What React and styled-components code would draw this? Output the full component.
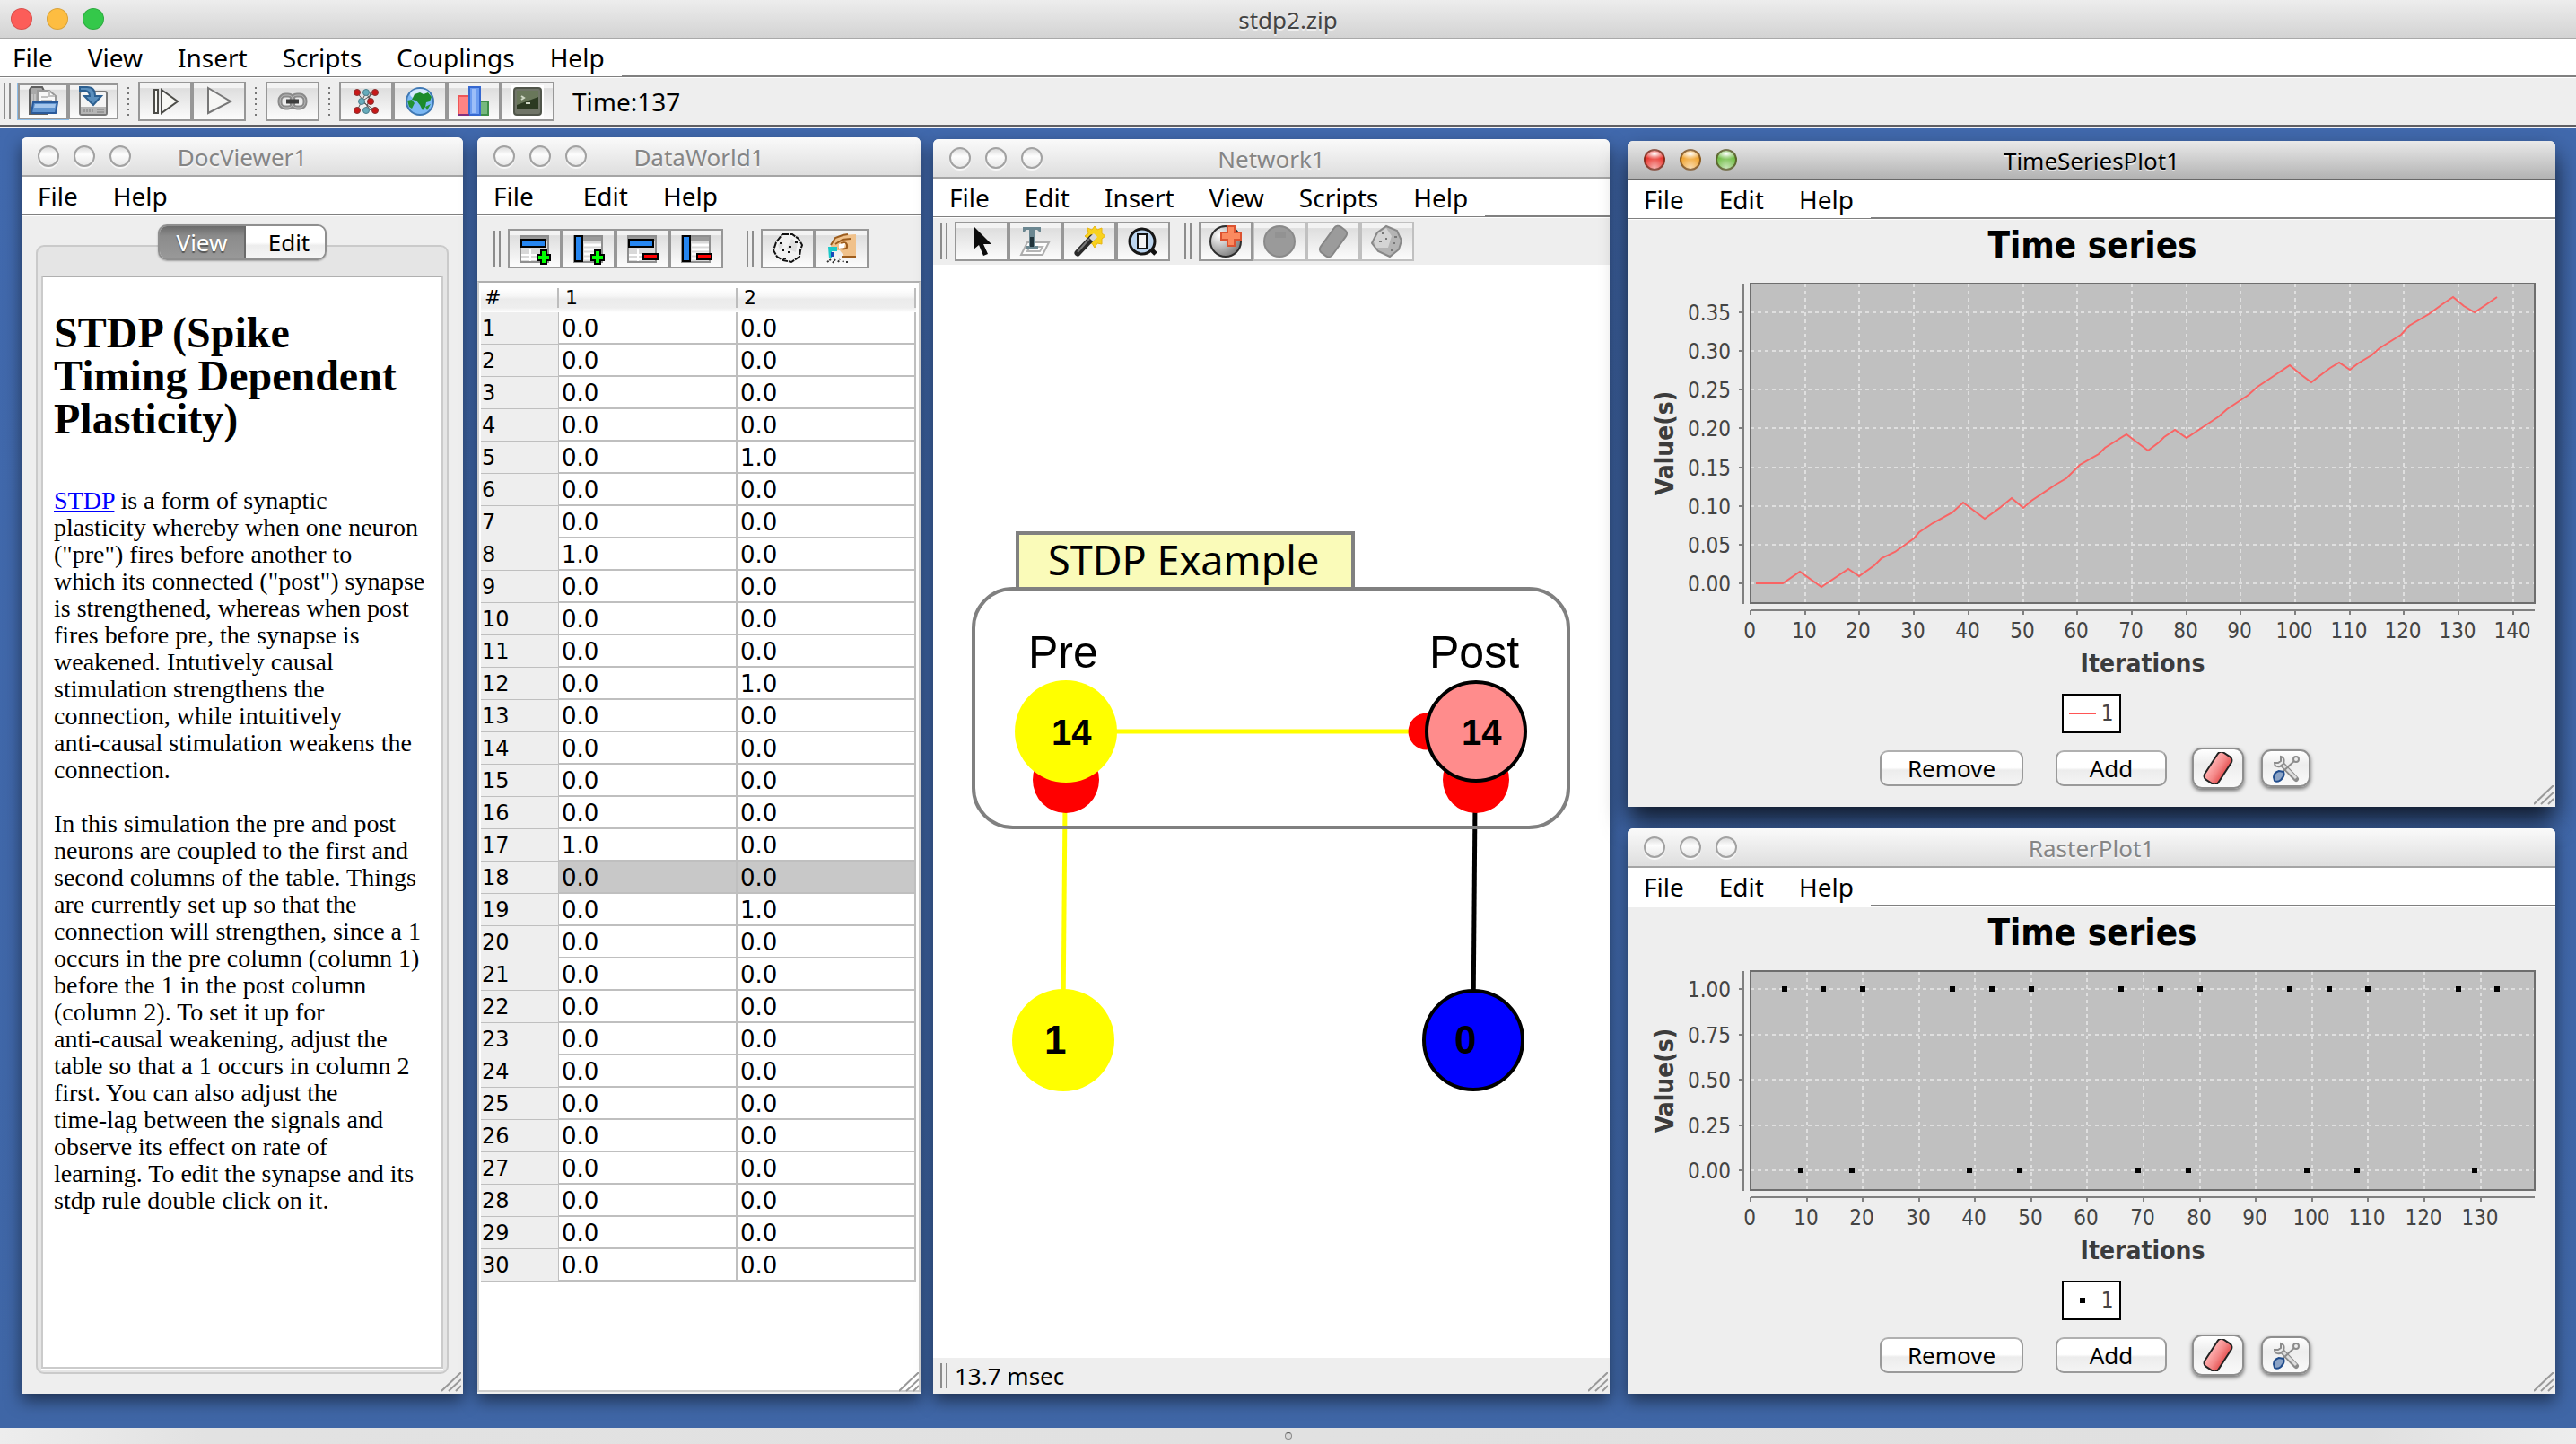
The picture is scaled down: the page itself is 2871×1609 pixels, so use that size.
import React, { Fragment } from 'react';
import styled, { createGlobalStyle, css } from 'styled-components';

const UI_FONT = '"Noto Sans", "Open Sans", sans-serif';
const CHART_FONT = '"DejaVu Sans Condensed", "Noto Sans", sans-serif';

const GlobalStyle = createGlobalStyle`
  * {
    box-sizing: border-box;
  }
  body {
    margin: 0;
    font-family: ${UI_FONT};
    color: #000;
  }
  button {
    font-family: inherit;
    color: inherit;
  }
`;

/* ---------- page ---------- */

const Page = styled.div`
  display: flex;
  flex-direction: column;
  min-height: 100vh;
  background: #eee;
`;

const Desktop = styled.main`
  flex: 1;
  display: grid;
  grid-template-columns: 492fr 16px 494fr 14px 754fr 20px 1034fr;
  padding: 10px 23px 38px 24px;
  background: linear-gradient(#4169ad, #3f66a6);
`;

const Column = styled.div`
  grid-column: ${({ $col }) => $col};
  display: flex;
  flex-direction: column;
  gap: 24px;
  min-width: 0;
  padding-top: ${({ $drop }) => $drop || 0}px;
`;

const BottomBar = styled.footer`
  display: flex;
  align-items: center;
  justify-content: center;
  height: 18px;
  background: linear-gradient(90deg, #ededed, #e2e2e2 8%, #e0e0e0 92%, #ededed);
`;

const SplitKnob = styled.span`
  width: 8px;
  height: 8px;
  border: 1px solid #8c8c8c;
  border-top-color: #555;
  border-radius: 50%;
  background: #d8d8d8;
`;

/* ---------- title bars ---------- */

const TitleBar = styled.header`
  display: grid;
  grid-template-columns: 1fr auto 1fr;
  align-items: center;
  height: 44px;
  padding: 0 18px;
  border-radius: 6px 6px 0 0;
  border-bottom: 2px solid ${({ $active }) => ($active ? '#686868' : '#a5a5a5')};
  background: ${({ $active }) =>
    $active ? 'linear-gradient(#e9e9e9, #b3b3b3)' : 'linear-gradient(#fafafa, #dedede)'};
`;

const MainTitleBar = styled(TitleBar)`
  height: 43px;
  padding: 0 12px;
  border-radius: 0;
  border-bottom: 1px solid #a9a9a9;
  background: linear-gradient(#ededed, #d3d3d3);
`;

const Lights = styled.div`
  display: flex;
  gap: 16px;
`;

const flatLight = css`
  border: 1px solid rgba(0, 0, 0, 0.14);
  background: ${({ $color }) => $color};
`;

const glossyLight = css`
  border: 2px solid rgba(60, 30, 10, 0.55);
  background: radial-gradient(ellipse 60% 30% at 50% 18%, #fff, transparent),
    radial-gradient(circle at 50% 95%, #fff9 0, transparent 60%), ${({ $color }) => $color};
`;

const emptyLight = css`
  border: 2px solid #a2a2a2;
  background: linear-gradient(#dcdcdc, #fdfdfd 40%, #e9e9e9);
  box-shadow: 0 2px 0 rgba(255, 255, 255, 0.7);
`;

const Light = styled.button`
  width: 24px;
  height: 24px;
  padding: 0;
  border-radius: 50%;
  ${({ $kind }) => ({ flat: flatLight, glossy: glossyLight, empty: emptyLight }[$kind])}
`;

const Title = styled.h1`
  margin: 1px 0 0;
  font-size: 26px;
  font-weight: 400;
  line-height: 32px;
  color: ${({ $color }) => $color || '#858585'};
  text-shadow: 0 2px 0 rgba(255, 255, 255, 0.6);
`;

/* ---------- menu bars ---------- */

const MenuBar = styled.nav`
  display: flex;
  height: 44px;
  border-bottom: 1px solid #fff;
  background: #fff;
`;

const MenuList = styled.div`
  display: flex;
  padding: 0 19px 0 ${({ $left }) => $left}px;
  gap: 39px;
  border-bottom: 1px solid #808080;
`;

const MenuFill = styled.div`
  flex: 1;
  border-bottom: 2px solid #808080;
`;

const MenuItem = styled.button`
  padding: 0;
  margin-right: ${({ $wide }) => ($wide ? 16 : 0)}px;
  border: 0;
  background: none;
  font-size: 28px;
  line-height: 40px;
`;

/* ---------- internal frames ---------- */

const Frame = styled.section`
  position: relative;
  flex: ${({ $fill }) => ($fill ? '1 0 auto' : '0 0 auto')};
  display: flex;
  flex-direction: column;
  border-radius: 6px 6px 0 0;
  background: #eee;
  box-shadow: ${({ $active }) =>
    $active ? '0 16px 28px rgba(0, 0, 0, 0.75)' : '0 8px 18px rgba(0, 0, 0, 0.5)'};
`;

const ResizeMark = styled.svg`
  position: absolute;
  right: 2px;
  bottom: 2px;
  width: 22px;
  height: 22px;
`;

/* ---------- tool bars ---------- */

const ToolBar = styled.div`
  display: flex;
  align-items: center;
  gap: 8px;
  height: ${({ $height }) => $height || 52}px;
  padding: 0 ${({ $left }) => $left || 8}px;
`;

const MainToolBar = styled(ToolBar)`
  height: 56px;
  padding: 0 4px 2px;
  border-bottom: 2px solid #f4f4f8;
  box-shadow: inset 0 -2px 0 #5f5f63;
`;

const Grip = styled.span`
  width: 8px;
  height: ${({ $height }) => $height || 40}px;
  margin-left: ${({ $gap }) => $gap || 0}px;
  border: solid #8c8c8c;
  border-width: 0 2px;
`;

const Dots = styled.span`
  width: 2px;
  height: 32px;
  margin: 0 2px;
  background: repeating-linear-gradient(#777 0 2px, transparent 2px 6px);
`;

const ButtonGroup = styled.div`
  display: flex;
`;

const ToolButton = styled.button`
  display: flex;
  align-items: center;
  justify-content: center;
  width: ${({ $small }) => ($small ? 56 : 60)}px;
  height: ${({ $small }) => ($small ? 40 : 44)}px;
  padding: 0;
  border: 2px solid ${({ disabled }) => (disabled ? '#c0c0c0' : '#979797')};
  outline: ${({ $focus }) => ($focus ? '1px solid #8bbce8' : 'none')};
  background: linear-gradient(#f3f3f3 12%, #dedede 14%, #fcfcfc);
  svg {
    width: 36px;
    height: 36px;
    overflow: visible;
  }
`;

const TimeLabel = styled.span`
  margin-left: 12px;
  font-size: 28px;
`;

/* ---------- document viewer ---------- */

const DocBody = styled.div`
  flex: 1;
  display: flex;
  flex-direction: column;
  padding: 9px 16px 22px;
`;

const Tabs = styled.div`
  position: relative;
  align-self: center;
  display: flex;
  height: 40px;
  margin-bottom: -17px;
  border: 2px solid #8f8f8f;
  border-radius: 10px;
  overflow: hidden;
  box-shadow: 0 1px 2px rgba(0, 0, 0, 0.3);
`;

const Tab = styled.button`
  width: ${({ $on }) => ($on ? 96 : 88)}px;
  padding: 0 0 0 ${({ $on }) => ($on ? 0 : 8)}px;
  border: 0;
  font-size: 26px;
  line-height: 32px;
  ${({ $on }) =>
    $on
      ? css`
          color: #fff;
          text-shadow: 0 2px 1px #555;
          background: linear-gradient(#6b6b6b, #8b8b8b 30%, #999);
          border-right: 2px solid #6a6a6a;
        `
      : css`
          background: linear-gradient(#fff 50%, #ededed 60%, #f6f6f6);
        `}
`;

const DocPanel = styled.div`
  flex: 1;
  display: flex;
  padding: 32px 4px 4px;
  border: 2px solid #cacaca;
  border-radius: 9px;
  background: #e5e5e5;
`;

const DocPage = styled.article`
  flex: 1;
  padding: 38px 8px 20px 12px;
  border: 2px solid #cbcbcb;
  border-top-color: #b0b0b0;
  background: #fff;
  box-shadow: 0 2px 0 #fff;
  font-family: 'Liberation Serif', serif;
  font-size: 28px;
  line-height: 30px;
  h2 {
    margin: 0 0 52px;
    font-size: 48px;
    line-height: 48px;
  }
  p {
    margin: 0 0 30px;
  }
  a {
    color: #00f;
  }
`;

/* ---------- data table ---------- */

const TableWell = styled.div`
  flex: 1;
  margin-bottom: 2px;
  padding: 0 3px 0 2px;
  border: 2px solid #cdcdcd;
  border-top-color: #b0b0b0;
  background: #fff;
`;

const Table = styled.table`
  width: 100%;
  table-layout: fixed;
  border-collapse: separate;
  border-spacing: 0;
  font-family: 'DejaVu Sans', sans-serif;
  text-align: left;
`;

const HeadCell = styled.th`
  width: ${({ $narrow }) => ($narrow ? '87px' : 'auto')};
  height: 33px;
  padding: 0 0 0 ${({ $narrow }) => ($narrow ? 4 : 7)}px;
  font-size: 22px;
  font-weight: 400;
  background: linear-gradient(#bdbdbd, #bdbdbd) right 6px / 2px 22px no-repeat,
    linear-gradient(#fff 20%, #f6f6f6 45%, #ebebeb 55%, #eee 85%, #fff);
`;

const RowHead = styled.th`
  height: 36px;
  padding: 0 0 0 1px;
  border-bottom: 1px solid #bfbfbf;
  border-right: 1px solid #bfbfbf;
  background: #eee;
  font-size: 24px;
  font-weight: 400;
  line-height: 32px;
`;

const Cell = styled.td`
  padding: 2px 0 0 3px;
  border: solid #bfbfbf;
  border-width: 0 2px 2px 0;
  background: ${({ $selected }) => ($selected ? '#c8c8c8' : '#fff')};
  font-size: 26px;
  line-height: 32px;
`;

/* ---------- network ---------- */

const Canvas = styled.div`
  flex: 1;
  background: #fff;
`;

const Graph = styled.svg`
  display: block;
  width: 100%;
`;

const StatusBar = styled.div`
  display: flex;
  align-items: center;
  gap: 8px;
  height: 40px;
  padding: 0 8px;
  font-size: 26px;
`;

/* ---------- plots ---------- */

const PlotBody = styled.div`
  display: flex;
  flex-direction: column;
  align-items: center;
  padding-bottom: 20px;
`;

const ChartSvg = styled.svg`
  display: block;
  width: 100%;
  font-family: ${CHART_FONT};
`;

const Legend = styled.div`
  display: flex;
  align-items: center;
  gap: 6px;
  height: 44px;
  margin: 16px 0;
  padding: 0 7px 0 6px;
  border: 2px solid #000;
  background: #fff;
  font-family: ${CHART_FONT};
  font-size: 24px;
  color: #444;
`;

const LegendKey = styled.span`
  display: flex;
  justify-content: center;
  width: 30px;
  &::before {
    content: '';
    width: ${({ $dot }) => ($dot ? 6 : 30)}px;
    height: ${({ $dot }) => ($dot ? 6 : 2)}px;
    background: ${({ $dot }) => ($dot ? '#000' : '#f55')};
  }
`;

const PlotButtons = styled.div`
  display: flex;
  align-items: center;
  height: 46px;
  margin-left: 8px;
`;

const PushButton = styled.button`
  width: ${({ $width }) => $width}px;
  height: 40px;
  margin-right: ${({ $gap }) => $gap}px;
  padding: 0;
  border: 2px solid #9a9a9a;
  border-top-color: #b0b0b0;
  border-radius: 9px;
  background: linear-gradient(#fff 48%, #ececec 56%, #f4f4f4);
  font-size: 26px;
  line-height: 32px;
`;

const IconButton = styled.button`
  display: flex;
  align-items: center;
  justify-content: center;
  width: ${({ $width }) => $width}px;
  height: ${({ $height }) => $height}px;
  margin-right: ${({ $gap }) => $gap || 0}px;
  padding: 0;
  border: 2px solid #8e8e8e;
  border-radius: 11px;
  background: linear-gradient(#fff, #ededed 40%, #fafafa);
  box-shadow: 0 2px 4px rgba(0, 0, 0, 0.55);
  svg {
    width: 36px;
    height: 36px;
  }
`;

/* ---------- icons, all on a 36 x 36 grid ---------- */

const OpenIcon = () => (
  <svg viewBox="0 0 36 36">
    <path d="M3 32V5l2-3h12l2 4h3v26z" fill="#a9a9a9" stroke="#5f5f5f" strokeWidth="2" />
    <path d="M6 28V10M9 28V10" stroke="#dcdcdc" strokeWidth="1" />
    <path d="M12 6h13l7 6v14H12z" fill="#f8f8f8" stroke="#999" strokeWidth="2" />
    <path d="M25 6v6h6M16 13h8M16 17h12" fill="none" stroke="#c2c2c2" strokeWidth="2" />
    <path d="M7 19h27l-2 12H5z" fill="#5f93cf" stroke="#2a5a9b" strokeWidth="2" />
    <path d="M9 21h23l-1 4H8z" fill="#a5c6ec" />
  </svg>
);

const SaveIcon = () => (
  <svg viewBox="0 0 36 36">
    <rect x="3" y="7" width="30" height="26" rx="2" fill="#f4f4f4" stroke="#777" strokeWidth="2" />
    <path d="M4 24h28v8H4z" fill="#b5b5b5" />
    <path d="M8 26v4M11 26v4M14 26v4M17 26v4M22 27h8M22 30h8" stroke="#7c7c7c" strokeWidth="1" />
    <path d="M3 2h8q9 0 9 10h7L18 22 8 12h6q0-5-5-6H3z" fill="#5b8fbd" stroke="#2c5f90" strokeWidth="2" />
  </svg>
);

const StepIcon = () => (
  <svg viewBox="0 0 36 36" fill="#f8f8f4" stroke="#4c4c48" strokeWidth="2">
    <path d="M6 5h4v26H6zM14 5l18 13-18 13z" />
  </svg>
);

const PlayIcon = () => (
  <svg viewBox="0 0 36 36">
    <path d="M6 3l25 15L6 31z" fill="#f6f6f4" stroke="#777" strokeWidth="2" />
  </svg>
);

const ChainIcon = () => (
  <svg viewBox="0 0 36 36" fill="none">
    <rect x="4" y="11" width="15" height="14" rx="6" stroke="#8a8a8a" strokeWidth="5" />
    <rect x="17" y="11" width="15" height="14" rx="6" stroke="#8a8a8a" strokeWidth="5" />
    <rect x="4" y="11" width="15" height="14" rx="6" stroke="#bbb" strokeWidth="1" />
    <rect x="17" y="11" width="15" height="14" rx="6" stroke="#bbb" strokeWidth="1" />
    <path d="M11 18h14" stroke="#3d3d3d" strokeWidth="5" />
  </svg>
);

const NetIcon = () => (
  <svg viewBox="0 0 36 36">
    <path d="M8 8l15 20M28 8L13 18l15 10M8 28l10-20M18 28l5-20M18 8l5 10" fill="none" stroke="#555" />
    {[[8, 8], [28, 8], [23, 18], [8, 28], [28, 28]].map(([x, y]) => (
      <circle key={`${x}-${y}`} cx={x} cy={y} r="3.5" fill="#c81818" stroke="#833" />
    ))}
    {[[18, 8], [13, 18], [18, 28]].map(([x, y]) => (
      <circle key={`${x}-${y}`} cx={x} cy={y} r="3.5" fill="#67acbc" stroke="#4a7f8c" />
    ))}
  </svg>
);

const GlobeIcon = () => (
  <svg viewBox="0 0 36 36">
    <circle cx="18" cy="18" r="15" fill="#7cb8f4" stroke="#3f78b4" strokeWidth="2" />
    <ellipse cx="18" cy="10" rx="11" ry="6" fill="#d5e9fc" />
    <path d="M12 10l6-2 4 2 5-2 4 5-2 5-4 1-1 5-3 4-3-6-4-5-5-1z" fill="#1b8b2c" />
    <path d="M4 17l5-1 3 4-3 6-3-2zM24 24l6-3-4 7z" fill="#239233" />
  </svg>
);

const BarsIcon = () => (
  <svg viewBox="0 0 36 36">
    <path d="M1 12h12v21H1z" fill="#ff8484" stroke="#ee5656" strokeWidth="2" />
    <path d="M24 18h10v15H24z" fill="#76b87e" stroke="#3f8f4a" strokeWidth="2" />
    <path d="M13 2h12v31H13z" fill="#6d9cf0" stroke="#3668d0" strokeWidth="2" />
    <path d="M16 4h5v27h-5z" fill="#9dbef8" />
    <path d="M0 33h13" stroke="#803080" strokeWidth="2" />
  </svg>
);

const TerminalIcon = () => (
  <svg viewBox="0 0 36 36">
    <path d="M0 0h36v36H0z" fill="#fff" />
    <rect x="3" y="3" width="30" height="30" rx="3" fill="#707568" stroke="#50554a" strokeWidth="2" />
    <path d="M6 6h24v20H6z" fill="#2c3a22" />
    <path d="M6 6h24v7L6 22z" fill="#69775a" />
    <path d="M11 12l3 2-3 2M16 20h5" fill="none" stroke="#cfd8c4" strokeWidth="2" />
  </svg>
);

// shared by the insert / delete row and column buttons
const GridIcon = ({ column, add }) => (
  <svg viewBox="0 0 36 36">
    <path d="M2 4h31v29H2z" fill="#d9d9d9" stroke="#8f8f8f" strokeWidth="2" />
    <path d="M3 5h29v5H3z" fill="#9a9a9a" />
    {column
      ? <path d="M13 14h19M13 19h19M13 24h19M13 29h19" stroke="#fff" strokeWidth="3" />
      : <path d="M3 25h29M3 30h29M13 19v13" stroke="#fff" strokeWidth="2" />}
    {column
      ? <path d="M3 4h8v28H3z" fill="#2686f0" stroke="#000" strokeWidth="2" />
      : <path d="M3 8h27v8H3z" fill="#2686f0" stroke="#000" strokeWidth="2" />}
    {add
      ? <path d="M25 20h6v5h4v6h-4v4h-6v-4h-4v-6h4z" fill="#0f0" stroke="#000" strokeWidth="2" />
      : <path d="M19 24h16v6H19z" fill="#f00" stroke="#000" strokeWidth="2" />}
  </svg>
);

const RockIcon = () => (
  <svg viewBox="0 0 36 36">
    <path d="M12 2h11l7 5 4 7-2 6-1 7-9 6-9-2-7-4-4-7 3-9z" fill="#f2f2f2" stroke="#111" strokeWidth="2" strokeDasharray="7 1" />
    <path d="M22 7l7 4-2 11-10-4zM7 14l3-4 3 4-4 5z" fill="#dedede" />
    <path d="M9 12h3M19 16h3M12 20h2M18 22h3M13 29h3M26 11h3" stroke="#111" strokeWidth="2" />
  </svg>
);

const HandIcon = () => (
  <svg viewBox="0 0 36 36">
    <path d="M6 15L10 7l8-4 16-1v25l-12 1-6-8H8z" fill="#f0c18a" />
    <path d="M6 14l5-8 8-3 6-1M11 13l8-5 9-1M17 12q8-3 7 5-4 3-9 0M34 27H18" fill="none" stroke="#9c5c1d" strokeWidth="2" />
    <path d="M15 13l7-1-1 5-6 1z" fill="#fff" />
    <path d="M3 16h10v5H7v8H4z" fill="#1cc9c9" />
    <path d="M6 22h4v5H6z" fill="#1747b8" />
    <path d="M2 33l4-3M8 34l3-4M14 33l2-3M19 33l2-2M24 34v-2" stroke="#333" strokeWidth="2" strokeDasharray="2 1" />
  </svg>
);

const ArrowIcon = () => (
  <svg viewBox="0 0 36 36">
    <path d="M9 1v26l6-5 5 12 5-2-5-11h9z" fill="#0c0c0c" />
  </svg>
);

const TextIcon = () => (
  <svg viewBox="0 0 36 36">
    <path d="M9 19h24l-7 14H2z" fill="#fdfdfd" stroke="#adadad" strokeWidth="2" />
    <path d="M12 24h14l-3 5H9z" fill="none" stroke="#b5b5b5" strokeWidth="2" />
    <path d="M4 2h20v5h-2l-2-2h-3v18h4v3h-13v-3h3V5H8L6 7H4z" fill="#6b8791" />
    <path d="M12 13h4v11h-4z" fill="#20333b" />
  </svg>
);

const WandIcon = () => (
  <svg viewBox="0 0 36 36">
    <path d="M24 1l3 4 5-2v6l4 3-4 3v6l-5-1-3 5-3-5-5 1 1-6-4-3 4-3-1-6 5 2z" fill="#f8d21e" stroke="#e8b510" />
    <path d="M5 31L21 14" stroke="#2a2a2a" strokeWidth="7" strokeLinecap="round" />
    <path d="M5 30L18 15" stroke="#777" strokeWidth="2" />
    <path d="M20 16l5-5" stroke="#d8d8d8" strokeWidth="6" />
  </svg>
);

const ZoomIcon = () => (
  <svg viewBox="0 0 36 36">
    <path d="M26 26l6 6" stroke="#111" strokeWidth="5" />
    <circle cx="17" cy="18" r="14" fill="#bcd5ef" stroke="#161616" strokeWidth="3" />
    <path d="M12 10h10v16H12z" fill="#f3f3f3" stroke="#111" strokeWidth="2" />
  </svg>
);

const AddNeuronIcon = () => (
  <svg viewBox="0 0 36 36">
    <defs>
      <radialGradient id="ball" cx="0.3" cy="0.3" r="0.8">
        <stop offset="0" stopColor="#fff" />
        <stop offset="1" stopColor="#777" />
      </radialGradient>
    </defs>
    <circle cx="18" cy="18" r="17" fill="url(#ball)" stroke="#2e2e2e" strokeWidth="2" />
    <path d="M20 1h8v7h7v8h-7v7h-8v-7h-7V8h7z" fill="#fb8a5f" stroke="#dc5331" strokeWidth="2" />
  </svg>
);

const GreyBallIcon = () => (
  <svg viewBox="0 0 36 36">
    <circle cx="18" cy="18" r="17" fill="#9a9a9a" stroke="#8a8a8a" strokeWidth="2" />
    <path d="M13 8h12v6H13z" fill="#929292" />
  </svg>
);

const GreyEraserIcon = () => (
  <svg viewBox="0 0 36 36">
    <rect x="10" y="0" width="16" height="36" rx="5" transform="rotate(36 18 18)" fill="#9b9b9b" stroke="#868686" strokeWidth="2" />
  </svg>
);

const GreyDieIcon = () => (
  <svg viewBox="0 0 36 36">
    <path d="M7 8L17 1l12 5 5 11-3 10-10 8-13-6-7-9z" fill="#b4b4b4" stroke="#888" strokeWidth="2" />
    <path d="M8 9l9-6 6 9-4 13-13 0-3-7z" fill="#d4d4d4" />
    <path d="M12 9h3M9 18h3M16 15h2M26 13h3M24 20h3M22 28h3" stroke="#777" strokeWidth="2" />
  </svg>
);

const EraserIcon = () => (
  <svg viewBox="0 0 36 36">
    <defs>
      <linearGradient id="rubber">
        <stop offset="0" stopColor="#ffb0b0" />
        <stop offset="0.55" stopColor="#f48787" />
        <stop offset="1" stopColor="#e65454" />
      </linearGradient>
    </defs>
    <rect x="9" y="0" width="18" height="36" rx="5" transform="rotate(33 18 18)" fill="url(#rubber)" stroke="#222" strokeWidth="2" />
  </svg>
);

const ToolsIcon = () => (
  <svg viewBox="0 0 36 36" fill="none">
    <path d="M13 13l16 17" stroke="#8c8c8c" strokeWidth="6" strokeLinecap="round" />
    <path d="M14 14l15 15" stroke="#dedede" strokeWidth="3" />
    <path d="M5 12q0 5 6 4l4-3q2-7-3-8v5l-3 2z" fill="#ececec" stroke="#8c8c8c" strokeWidth="2" />
    <path d="M13 23L29 8" stroke="#8c8c8c" strokeWidth="2" />
    <circle cx="29" cy="8" r="3" fill="#eee" stroke="#8c8c8c" strokeWidth="2" />
    <path d="M4 28q0-5 6-7l5 1q2 4-3 9-4 3-7 1z" fill="#8ba3c6" stroke="#204c8c" strokeWidth="2" />
  </svg>
);

/* ---------- shared pieces ---------- */

const LIGHT_COLORS = {
  flat: ['#fc5d59', '#fdbd41', '#34c84a'],
  glossy: ['#ea3b34', '#f1a737', '#75bf4b'],
  empty: ['', '', ''],
};

const WindowLights = ({ kind }) => (
  <Lights>
    {['Close', 'Minimize', 'Zoom'].map((name, i) => (
      <Light key={name} $kind={kind} $color={LIGHT_COLORS[kind][i]} aria-label={name} />
    ))}
  </Lights>
);

const Menu = ({ items, left = 18, wideFirst }) => (
  <MenuBar>
    <MenuList $left={left}>
      {items.map((item, i) => (
        <MenuItem key={item} $wide={wideFirst && i === 0}>{item}</MenuItem>
      ))}
    </MenuList>
    <MenuFill />
  </MenuBar>
);

const Tools = ({ items, small }) => (
  <ButtonGroup>
    {items.map(([label, icon, disabled], i) => (
      <ToolButton key={label} aria-label={label} disabled={disabled} $small={small} $focus={small && i === 0}>
        {icon}
      </ToolButton>
    ))}
  </ButtonGroup>
);

const InternalFrame = ({ title, menu, wideFirst, active, fill, children }) => (
  <Frame $active={active} $fill={fill}>
    <TitleBar $active={active}>
      <WindowLights kind={active ? 'glossy' : 'empty'} />
      <Title $color={active ? '#000' : undefined}>{title}</Title>
    </TitleBar>
    <Menu items={menu} wideFirst={wideFirst} />
    {children}
    <ResizeMark viewBox="0 0 22 22" stroke="#999" strokeWidth="2">
      <path d="M0 21L22 0M8 21L22 8M16 21L22 15" />
    </ResizeMark>
  </Frame>
);

/* ---------- windows ---------- */

const INTRO = [
  ' is a form of synaptic',
  'plasticity whereby when one neuron',
  '("pre") fires before another to',
  'which its connected ("post") synapse',
  'is strengthened, whereas when post',
  'fires before pre, the synapse is',
  'weakened. Intutively causal',
  'stimulation strengthens the',
  'connection, while intuitively',
  'anti-causal stimulation weakens the',
  'connection.',
];

const DETAILS = [
  'In this simulation the pre and post',
  'neurons are coupled to the first and',
  'second columns of the table. Things',
  'are currently set up so that the',
  'connection will strengthen, since a 1',
  'occurs in the pre column (column 1)',
  'before the 1 in the post column',
  '(column 2). To set it up for',
  'anti-causal weakening, adjust the',
  'table so that a 1 occurs in column 2',
  'first. You can also adjust the',
  'time-lag between the signals and',
  'observe its effect on rate of',
  'learning. To edit the synapse and its',
  'stdp rule double click on it.',
];

const Lines = ({ lines }) => lines.map((line, i) => (
  <Fragment key={line}>
    {i > 0 && <br />}
    {line}
  </Fragment>
));

const DocViewer = () => (
  <InternalFrame title="DocViewer1" menu={['File', 'Help']} fill>
    <DocBody>
      <Tabs>
        <Tab $on>View</Tab>
        <Tab>Edit</Tab>
      </Tabs>
      <DocPanel>
        <DocPage>
          <h2><Lines lines={['STDP (Spike', 'Timing Dependent', 'Plasticity)']} /></h2>
          <p><a href="#stdp">STDP</a><Lines lines={INTRO} /></p>
          <p><Lines lines={DETAILS} /></p>
        </DocPage>
      </DocPanel>
    </DocBody>
  </InternalFrame>
);

const ROW_COUNT = 30;
const CURRENT_ROW = 18;
const PRE_SPIKES = [8, 17];
const POST_SPIKES = [5, 12, 19];

const DataWorld = () => (
  <InternalFrame title="DataWorld1" menu={['File', 'Edit', 'Help']} wideFirst fill>
    <ToolBar $height={72} $left={18}>
      <Grip />
      <Tools
        items={[
          ['Insert row', <GridIcon add />],
          ['Insert column', <GridIcon column add />],
          ['Delete row', <GridIcon />],
          ['Delete column', <GridIcon column />],
        ]}
      />
      <Grip $gap={18} />
      <Tools items={[['Randomize', <RockIcon />], ['Fill', <HandIcon />]]} />
    </ToolBar>
    <TableWell>
      <Table>
        <thead>
          <tr>
            <HeadCell $narrow>#</HeadCell>
            <HeadCell>1</HeadCell>
            <HeadCell>2</HeadCell>
          </tr>
        </thead>
        <tbody>
          {Array.from({ length: ROW_COUNT }, (_, i) => i + 1).map(row => (
            <tr key={row}>
              <RowHead scope="row">{row}</RowHead>
              <Cell $selected={row === CURRENT_ROW}>{PRE_SPIKES.includes(row) ? '1.0' : '0.0'}</Cell>
              <Cell $selected={row === CURRENT_ROW}>{POST_SPIKES.includes(row) ? '1.0' : '0.0'}</Cell>
            </tr>
          ))}
        </tbody>
      </Table>
    </TableWell>
  </InternalFrame>
);

const NetworkGraph = () => (
  <Graph viewBox="0 0 754 1000" role="img" aria-label="Network">
    {/* synapses */}
    <g strokeWidth="5">
      <path d="M148 520H550" stroke="#ff0" />
      <path d="M147 600L145 840" stroke="#ff0" />
      <path d="M604 600L602 840" stroke="#000" />
    </g>
    <g fill="#f00">
      <circle cx="550" cy="520" r="20.5" />
      <circle cx="148" cy="574" r="37" />
      <circle cx="605" cy="574" r="37" />
    </g>
    {/* group outline and its tab */}
    <rect x="45" y="361" width="663" height="266" rx="44" fill="none" stroke="#808080" strokeWidth="4" />
    <rect x="94" y="299" width="374" height="62" fill="#fafbb9" stroke="#808080" strokeWidth="4" />
    <text x="128" y="346" fontSize="45">STDP Example</text>
    {/* neurons */}
    <circle cx="148" cy="520" r="57" fill="#ff0" />
    <circle cx="605" cy="520" r="55" fill="#ff8c8c" stroke="#000" strokeWidth="4" />
    <circle cx="145" cy="864" r="57" fill="#ff0" />
    <circle cx="602" cy="864" r="55" fill="#00f" stroke="#000" strokeWidth="4" />
    <g fontFamily="Liberation Sans, sans-serif">
      <g fontSize="50">
        <text x="106" y="449">Pre</text>
        <text x="553" y="449">Post</text>
      </g>
      <g fontSize="40" fontWeight="700">
        <text x="132" y="535">14</text>
        <text x="589" y="535">14</text>
      </g>
      <g fontSize="44" fontWeight="700">
        <text x="124" y="879">1</text>
        <text x="581" y="879">0</text>
      </g>
    </g>
  </Graph>
);

const Network = () => (
  <InternalFrame title="Network1" menu={['File', 'Edit', 'Insert', 'View', 'Scripts', 'Help']} fill>
    <ToolBar>
      <Grip />
      <Tools
        items={[
          ['Select', <ArrowIcon />],
          ['Text', <TextIcon />],
          ['Wand', <WandIcon />],
          ['Zoom to fit', <ZoomIcon />],
        ]}
      />
      <Grip $gap={8} />
      <Tools
        items={[
          ['Add neuron', <AddNeuronIcon />],
          ['Neuron properties', <GreyBallIcon />, true],
          ['Clear', <GreyEraserIcon />, true],
          ['Randomize', <GreyDieIcon />, true],
        ]}
      />
    </ToolBar>
    <Canvas>
      <NetworkGraph />
    </Canvas>
    <StatusBar>
      <Grip $height={28} />
      <span>13.7 msec</span>
    </StatusBar>
  </InternalFrame>
);

/* ---------- charts ---------- */

const PLOT = { left: 137, top: 71, width: 874 };

const Chart = ({ plotHeight, xMax, xStep, xScale, yTicks, yZero, yScale, children }) => {
  const bottom = PLOT.top + plotHeight;
  const toX = v => Math.round(PLOT.left + v * xScale);
  const toY = v => Math.round(yZero - v * yScale);
  const xTicks = [];
  for (let v = 0; v <= xMax; v += xStep) xTicks.push(v);

  return (
    <ChartSvg viewBox={`0 0 1034 ${plotHeight + 156}`} role="img" aria-label="Time series">
      <text x="518" y="42" fontSize="40" fontWeight="700" textAnchor="middle">Time series</text>
      <rect x={PLOT.left} y={PLOT.top} width={PLOT.width} height={plotHeight} fill="#c0c0c0" />
      <g stroke="#dfdfdf" strokeWidth="2" strokeDasharray="4 4">
        {xTicks.slice(1).map(v => <path key={v} d={`M${toX(v)} ${bottom}V${PLOT.top}`} />)}
        {yTicks.map(v => <path key={v} d={`M${PLOT.left} ${toY(v)}h${PLOT.width}`} />)}
      </g>
      {children(toX, toY)}
      <rect x={PLOT.left} y={PLOT.top} width={PLOT.width} height={plotHeight} fill="none" stroke="#6e6e6e" strokeWidth="2" />
      <g stroke="#808080" strokeWidth="2">
        <path d={`M${PLOT.left - 8} ${PLOT.top}V${bottom + 1}M${PLOT.left} ${bottom + 8}h${PLOT.width}`} />
        {xTicks.map(v => <path key={v} d={`M${toX(v)} ${bottom + 8}v5`} />)}
        {yTicks.map(v => <path key={v} d={`M${PLOT.left - 13} ${toY(v)}h5`} />)}
      </g>
      <g fontSize="24" fill="#444">
        {xTicks.map(v => <text key={v} x={toX(v) - 1} y={bottom + 39} textAnchor="middle">{v}</text>)}
        {yTicks.map(v => <text key={v} x="115" y={toY(v) + 9} textAnchor="end">{v.toFixed(2)}</text>)}
      </g>
      <g fontSize="28" fontWeight="700" fill="#3c3c3c" textAnchor="middle">
        <text x="574" y={bottom + 77}>Iterations</text>
        <text transform={`translate(51 ${PLOT.top + plotHeight / 2}) rotate(-90)`}>Value(s)</text>
      </g>
    </ChartSvg>
  );
};

const SERIES = [
  [1, 0], [6, 0], [9, 0.0147], [13, -0.005], [18, 0.019], [20, 0.009], [22.7, 0.0233], [24, 0.032],
  [26.5, 0.04], [30, 0.058], [31, 0.066], [33.5, 0.0775], [37, 0.092], [39, 0.1047], [43, 0.0833],
  [46, 0.098], [48, 0.1097], [50, 0.0973], [51.5, 0.1065], [56, 0.128], [58, 0.1357], [60.5, 0.1524],
  [64, 0.167], [65, 0.1745], [69, 0.1926], [71, 0.182], [73, 0.171], [75, 0.1814], [76, 0.189],
  [78, 0.1976], [80, 0.1872], [83, 0.2015], [86, 0.2154], [87.5, 0.225], [91.5, 0.243], [93, 0.254],
  [95.5, 0.265], [99, 0.281], [101, 0.2696], [103, 0.259], [104.5, 0.268], [106.5, 0.2785],
  [108, 0.2854], [110, 0.2758], [111.5, 0.284], [114, 0.294], [115.5, 0.304], [119.5, 0.3206],
  [121, 0.332], [124.5, 0.3477], [127, 0.3604], [129, 0.3697], [131, 0.3585], [133, 0.3496],
  [135, 0.359], [137, 0.3697],
];

const RASTER = [
  [1, [6, 13, 20, 36, 43, 50, 66, 73, 80, 96, 103, 110, 126, 133]],
  [0, [9, 18, 39, 48, 69, 78, 99, 108, 129]],
];

const PlotControls = ({ dot }) => (
  <>
    <Legend><LegendKey $dot={dot} />1</Legend>
    <PlotButtons>
      <PushButton $width={160} $gap={36}>Remove</PushButton>
      <PushButton $width={124} $gap={28}>Add</PushButton>
      <IconButton $width={58} $height={46} $gap={19} aria-label="Clear"><EraserIcon /></IconButton>
      <IconButton $width={55} $height={42} aria-label="Preferences"><ToolsIcon /></IconButton>
    </PlotButtons>
  </>
);

const TimeSeriesPlot = () => (
  <InternalFrame title="TimeSeriesPlot1" menu={['File', 'Edit', 'Help']} active>
    <PlotBody>
      <Chart
        plotHeight={356}
        xMax={140}
        xStep={10}
        xScale={6.07}
        yTicks={[0, 0.05, 0.1, 0.15, 0.2, 0.25, 0.3, 0.35]}
        yZero={405}
        yScale={863}
      >
        {(toX, toY) => (
          <polyline
            points={SERIES.map(([x, y]) => `${toX(x)},${toY(y)}`).join(' ')}
            fill="none"
            stroke="#f96464"
            strokeWidth="2"
          />
        )}
      </Chart>
      <PlotControls />
    </PlotBody>
  </InternalFrame>
);

const RasterPlot = () => (
  <InternalFrame title="RasterPlot1" menu={['File', 'Edit', 'Help']}>
    <PlotBody>
      <Chart
        plotHeight={244}
        xMax={130}
        xStep={10}
        xScale={6.258}
        yTicks={[0, 0.25, 0.5, 0.75, 1]}
        yZero={293}
        yScale={202}
      >
        {(toX, toY) => RASTER.map(([value, times]) => times.map(t => (
          <rect key={t} x={toX(t) - 3} y={toY(value) - 3} width="6" height="6" />
        )))}
      </Chart>
      <PlotControls dot />
    </PlotBody>
  </InternalFrame>
);

const App = () => (
  <Page>
    <GlobalStyle />
    <MainTitleBar>
      <WindowLights kind="flat" />
      <Title $color="#444">stdp2.zip</Title>
    </MainTitleBar>
    <Menu items={['File', 'View', 'Insert', 'Scripts', 'Couplings', 'Help']} left={14} />
    <MainToolBar>
      <Grip />
      <Tools small items={[['Open', <OpenIcon />], ['Save', <SaveIcon />]]} />
      <Dots />
      <Tools items={[['Step', <StepIcon />], ['Run', <PlayIcon />]]} />
      <Dots />
      <Tools items={[['Couplings', <ChainIcon />]]} />
      <Dots />
      <Tools
        items={[
          ['New network', <NetIcon />],
          ['New world', <GlobeIcon />],
          ['New plot', <BarsIcon />],
          ['Console', <TerminalIcon />],
        ]}
      />
      <TimeLabel>Time:137</TimeLabel>
    </MainToolBar>
    <Desktop>
      <Column $col={1}><DocViewer /></Column>
      <Column $col={3}><DataWorld /></Column>
      <Column $col={5} $drop={2}><Network /></Column>
      <Column $col={7} $drop={4}>
        <TimeSeriesPlot />
        <RasterPlot />
      </Column>
    </Desktop>
    <BottomBar><SplitKnob /></BottomBar>
  </Page>
);

export default App;
